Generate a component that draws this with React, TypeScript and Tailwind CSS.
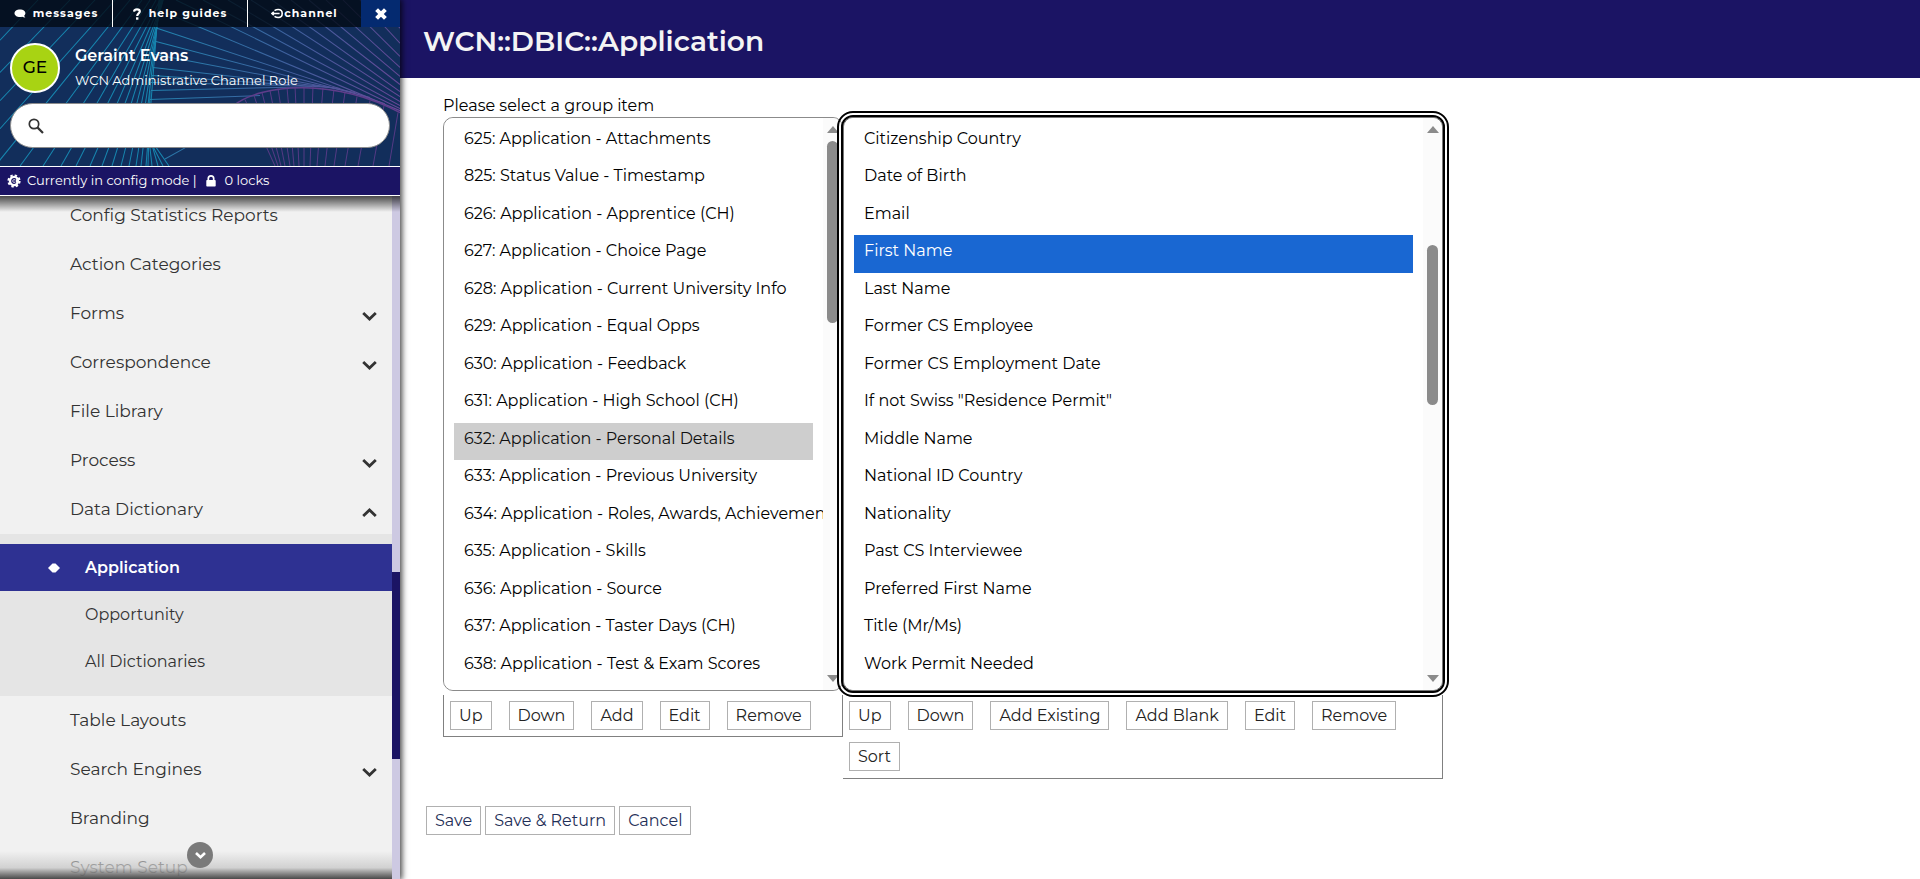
const groups = [
  "625: Application - Attachments",
  "825: Status Value - Timestamp",
  "626: Application - Apprentice (CH)",
  "627: Application - Choice Page",
  "628: Application - Current University Info",
  "629: Application - Equal Opps",
  "630: Application - Feedback",
  "631: Application - High School (CH)",
  "632: Application - Personal Details",
  "633: Application - Previous University",
  "634: Application - Roles, Awards, Achievements",
  "635: Application - Skills",
  "636: Application - Source",
  "637: Application - Taster Days (CH)",
  "638: Application - Test & Exam Scores",
];

const fields = [
  "Citizenship Country",
  "Date of Birth",
  "Email",
  "First Name",
  "Last Name",
  "Former CS Employee",
  "Former CS Employment Date",
  'If not Swiss "Residence Permit"',
  "Middle Name",
  "National ID Country",
  "Nationality",
  "Past CS Interviewee",
  "Preferred First Name",
  "Title (Mr/Ms)",
  "Work Permit Needed",
];

type Line = [number, number, number, number];

const cyanLines: Line[] = [
  [0, 40, 38, 0], [0, 72, 70, 0], [0, 100, 95, 0], [0, 128, 115, 0], [-5, 165, 130, 0],
  [20, 165, 142, 0], [43, 165, 150, 0], [61, 165, 156, 0], [76, 165, 160, 0], [90, 165, 162, 0],
  [102, 165, 163, 0], [112, 165, 163, 0], [121, 165, 163, 0], [129, 165, 162, 0], [136, 165, 161, 0],
  [141, 165, 160, 0], [146, 165, 159, 0], [148, 165, 150, 90], [152, 165, 147, 120], [158, 165, 148, 130],
  [163, 165, 150, 140], [169, 165, 155, 145],
];

const fanLines: Line[] = [
  [150, 99, 260, 95], [151, 90, 320, 86], [151, 82, 290, 85], [152, 75, 330, 87], [153, 67, 340, 88],
  [154, 54, 355, 92], [155, 41, 370, 97], [157, 28, 385, 103], [168, 14, 400, 110], [176, 0, 400, 108],
  [203, 0, 400, 105], [228, 0, 400, 101], [251, 0, 400, 96], [272, 0, 400, 91], [291, 0, 400, 84],
  [309, 0, 400, 76], [326, 0, 400, 67], [343, 0, 400, 56], [360, 0, 400, 43], [376, 0, 400, 28],
  [165, 158, 185, 147],
];

const purpleLines: Line[] = [
  [245, 99, 275, 165], [254, 95, 278, 165], [262, 92, 281, 165], [270, 90, 285, 165], [278, 88, 290, 165],
  [287, 87, 294, 165], [295, 86, 299, 165], [304, 86, 304, 165], [313, 86, 310, 165], [323, 87, 317, 165],
  [334, 89, 325, 165], [345, 92, 334, 165], [357, 96, 345, 165], [370, 100, 358, 165], [384, 105, 373, 165],
  [398, 112, 389, 165],
];

function lines(items: Line[], stroke: string) {
  return items.map(([x1, y1, x2, y2], i) => (
    <line key={i} x1={x1} y1={y1} x2={x2} y2={y2} stroke={stroke} />
  ));
}

function Pattern() {
  return (
    <svg className="absolute inset-0 h-full w-full" viewBox="0 0 400 165" preserveAspectRatio="none" aria-hidden="true">
      <defs>
        <linearGradient id="fan" gradientUnits="userSpaceOnUse" x1="150" y1="40" x2="400" y2="110">
          <stop offset="0" stopColor="#1f86b0" />
          <stop offset="0.5" stopColor="#3d629f" />
          <stop offset="1" stopColor="#6a4596" />
        </linearGradient>
      </defs>
      {lines(cyanLines, "#1787b0")}
      {lines(fanLines, "url(#fan)")}
      {lines(purpleLines, "#553a85")}
      <path d="M232 106C262 82 335 78 400 112" fill="none" stroke="#5f3d8a" strokeWidth="1.5" />
    </svg>
  );
}

function ChatIcon() {
  return (
    <svg className="h-[9px] w-3" viewBox="0 0 12 9" fill="currentColor" aria-hidden="true">
      <path d="M6 0.5C9 0.5 11.4 2.1 11.4 4.2C11.4 5.2 11 6 10.2 6.7C10.4 7.4 10.8 8 11.4 8.5C10.3 8.6 9 8.3 8.2 7.7C7.5 7.9 6.8 8 6 8C2.9 8 0.5 6.3 0.5 4.2C0.5 2.1 2.9 0.5 6 0.5Z" />
    </svg>
  );
}

function QuestionIcon() {
  return (
    <svg className="h-3 w-2" viewBox="0 0 8 12" aria-hidden="true">
      <path d="M1 3.6C1.2 2.1 2.4 1.3 4 1.3C5.7 1.3 6.8 2.2 6.8 3.5C6.8 5.4 4.2 5.4 4.2 8" fill="none" stroke="currentColor" strokeWidth="2.2" />
      <rect x="3" y="9.3" width="2.4" height="2.4" fill="currentColor" />
    </svg>
  );
}

function ChannelIcon() {
  return (
    <svg className="h-[11px] w-3" viewBox="0 0 12 11" fill="none" stroke="currentColor" strokeWidth="1.6" aria-hidden="true">
      <path d="M3.5 2.6C5 1.6 6 1.5 7.2 1.5C9.6 1.5 11.2 3.3 11.2 5.5C11.2 7.7 9.6 9.5 7.2 9.5C6 9.5 5 9.4 3.5 8.4M1 5.5H8.6M2.8 3.9L1 5.5L2.8 7.1" />
    </svg>
  );
}

function CloseIcon() {
  return (
    <svg className="h-3 w-3" viewBox="0 0 12 12" fill="none" stroke="currentColor" strokeWidth="4" aria-hidden="true">
      <path d="M1.6 1.6L10.4 10.4M10.4 1.6L1.6 10.4" />
    </svg>
  );
}

function SearchIcon() {
  return (
    <svg className="h-4 w-4 shrink-0 text-[#333]" viewBox="0 0 16 16" fill="none" stroke="currentColor" aria-hidden="true">
      <circle cx="6" cy="6" r="4.7" strokeWidth="1.7" />
      <path d="M9.4 9.4L15 15" strokeWidth="2.2" />
    </svg>
  );
}

function LockIcon() {
  return (
    <svg className="h-3 w-[10px]" viewBox="0 0 10 12" aria-hidden="true">
      <rect x="0.3" y="5" width="9.4" height="6.6" rx="0.8" fill="currentColor" />
      <path d="M2.3 5.5V3.6A2.7 2.7 0 0 1 7.7 3.6V5.5" fill="none" stroke="currentColor" strokeWidth="1.7" />
    </svg>
  );
}

function GearIcon() {
  return (
    <svg className="h-[14px] w-[14px]" viewBox="0 0 14 14" fill="none" aria-hidden="true">
      <circle cx="7" cy="7" r="5.2" fill="#fff" />
      <circle cx="7" cy="7" r="5.6" stroke="#fff" strokeWidth="2" strokeDasharray="2.4 2" />
      <path d="M8.9 5.6A2.3 2.3 0 1 0 8.9 8.4M6.2 7H9" stroke="#1b1464" strokeWidth="1.3" />
    </svg>
  );
}

function Chevron({ up }: { up?: boolean }) {
  return (
    <svg className="mt-[5px] h-[9px] w-[15px]" viewBox="0 0 15 9" fill="none" stroke="#333" strokeWidth="2.8" aria-hidden="true">
      <path d={up ? "M1.2 8L7.5 2L13.8 8" : "M1.2 1L7.5 7L13.8 1"} />
    </svg>
  );
}

function MenuItem({ label, open }: { label: string; open?: boolean }) {
  return (
    <a href="#" className="flex h-[49px] shrink-0 items-center justify-between pr-[15px] pl-[70px] text-[17px] text-[#333]">
      {label}
      {open !== undefined && <Chevron up={open} />}
    </a>
  );
}

function ListBox({ id, items, selected, label, focus, thumb }: {
  id: string; items: string[]; selected: string; label?: string; focus?: boolean; thumb: string;
}) {
  return (
    <div
      className={
        focus
          ? "relative z-10 flex rounded-[10px] border border-[#767676] bg-white outline-6 outline-black outline-double"
          : "flex rounded-[10px] border border-[#8b8b8b] bg-white"
      }
    >
      <select
        id={id}
        multiple
        size={15}
        autoFocus={focus}
        aria-label={label}
        defaultValue={[selected]}
        className="h-[572px] min-w-0 flex-1 appearance-none overflow-hidden rounded-l-[10px] bg-white px-[10px] py-[5px] text-[16px] text-black outline-none"
      >
        {items.map((t) => (
          <option key={t} className="px-[10px] pt-[6px] leading-[22px] odd:h-[37px] even:h-[38px]">
            {t}
          </option>
        ))}
      </select>
      <div className="flex w-[19px] flex-col items-center rounded-r-[10px] bg-[#fbfbfb] py-2" aria-hidden="true">
        <svg className="h-[7px] w-3 shrink-0" viewBox="0 0 12 7"><path d="M6 0L12 7H0Z" fill="#8b8b8b" /></svg>
        <div className="flex w-full flex-1 justify-center">
          <div className={thumb} />
        </div>
        <svg className="h-[7px] w-3 shrink-0" viewBox="0 0 12 7"><path d="M0 0H12L6 7Z" fill="#8b8b8b" /></svg>
      </div>
    </div>
  );
}

function Btn({ children, navy }: { children: string; navy?: boolean }) {
  return (
    <button
      type="button"
      className={
        navy
          ? "h-[29px] border border-[#b0b0b0] bg-white px-2 text-[16px] leading-[22px] text-[#1f2f57]"
          : "h-[29px] border border-[#b0b0b0] bg-white px-2 text-[16px] leading-[22px] text-[#222]"
      }
    >
      {children}
    </button>
  );
}

export default function App() {
  return (
    <div className="flex h-screen overflow-hidden bg-white font-['Montserrat','Inter',sans-serif] text-black">
      <aside className="relative z-20 flex w-[400px] shrink-0 flex-col bg-[#f1f1f1] shadow-[1px_0_6px_1px_rgba(0,0,0,0.75)]">
        <div className="relative h-[166px] shrink-0 bg-[#122e5b]">
          <Pattern />
          <nav className="relative flex h-[27px] text-[11px] font-bold tracking-[1px] text-white">
            <a href="#" className="flex w-[113px] items-center justify-center gap-[7px] border-r border-white bg-[#030a14]/80">
              <ChatIcon />
              messages
            </a>
            <a href="#" className="flex w-[135px] items-center justify-center gap-2 border-r border-white bg-[#030a14]/80">
              <QuestionIcon />
              help guides
            </a>
            <a href="#" className="flex flex-1 items-center justify-center gap-px bg-[#030a14]/80">
              <ChannelIcon />
              channel
            </a>
            <button type="button" aria-label="Close" className="flex w-[39px] items-center justify-center bg-[#042a70]">
              <CloseIcon />
            </button>
          </nav>
          <div className="relative flex items-center px-[10px] pt-4">
            <div className="flex h-[50px] w-[50px] items-center justify-center rounded-full border-2 border-white bg-[#a8d313] text-[17px] font-medium">
              GE
            </div>
            <div className="ml-[15px] text-white">
              <div className="text-[16px] leading-[25px] font-semibold">Geraint Evans</div>
              <div className="text-[13px] leading-[25px]">WCN Administrative Channel Role</div>
            </div>
          </div>
          <label className="relative mx-[10px] mt-[10px] flex h-[45px] items-center rounded-full border border-[#8c8c8c] bg-white pl-[17px]">
            <SearchIcon />
            <input type="text" aria-label="Search" className="min-w-0 flex-1 bg-transparent px-2 outline-none" />
          </label>
        </div>
        <div className="flex h-[30px] shrink-0 items-center border-y border-white bg-[#1b1464] pl-[7px] text-[13px] text-white">
          <GearIcon />
          <span className="ml-[6px]">Currently in config mode |</span>
          <span className="ml-[9px]">
            <LockIcon />
          </span>
          <span className="ml-[9px]">0 locks</span>
        </div>
        <div className="relative flex min-h-0 flex-1">
          <nav className="-mt-[5px] flex min-w-0 flex-1 flex-col overflow-hidden">
            <MenuItem label="Config Statistics Reports" />
            <MenuItem label="Action Categories" />
            <MenuItem label="Forms" open={false} />
            <MenuItem label="Correspondence" open={false} />
            <MenuItem label="File Library" />
            <MenuItem label="Process" open={false} />
            <MenuItem label="Data Dictionary" open />
            <div className="shrink-0 bg-[#e5e5e5] pt-[10px] pb-[11px] text-[16px] text-[#333]">
              <a href="#" className="flex h-[47px] items-center bg-[#2e3192] pl-12 font-semibold text-white">
                <svg className="mr-[25px] h-[10px] w-3" viewBox="0 0 12 10" aria-hidden="true">
                  <path d="M4.5 0.5H7.5L12 5L7.5 9.5H4.5L0 5Z" fill="#fff" />
                </svg>
                Application
              </a>
              <a href="#" className="flex h-[47px] items-center pl-[85px]">Opportunity</a>
              <a href="#" className="flex h-[47px] items-center pl-[85px]">All Dictionaries</a>
            </div>
            <MenuItem label="Table Layouts" />
            <MenuItem label="Search Engines" open={false} />
            <MenuItem label="Branding" />
            <MenuItem label="System Setup" />
          </nav>
          <div className="w-2 shrink-0 bg-[#cdc9e2]" aria-hidden="true">
            <div className="mt-[376px] h-[187px] bg-[#1b1464]" />
          </div>
          <div className="pointer-events-none absolute inset-x-0 top-0 h-4 bg-linear-to-b from-black/70 to-transparent" />
          <div className="pointer-events-none absolute right-2 bottom-0 left-0 h-[28px] bg-linear-to-b from-[#f1f1f1]/30 via-[#c9c9c9]/80 via-60% to-[#4a4a4a]" />
          <button
            type="button"
            aria-label="Scroll down"
            className="absolute bottom-[11px] left-1/2 flex h-[26px] w-[26px] -translate-x-1/2 items-center justify-center rounded-full bg-[#7a7a7a]"
          >
            <svg className="h-[7px] w-[11px]" viewBox="0 0 11 7" fill="none" stroke="#fff" strokeWidth="2.6" aria-hidden="true">
              <path d="M1 1L5.5 5.2L10 1" />
            </svg>
          </button>
        </div>
      </aside>

      <main className="min-w-0 flex-1">
        <header className="flex h-[78px] items-center bg-[#1b1464] pt-1 pl-[23px]">
          <h1 className="text-[28px] font-semibold text-[#f4f4f4]">WCN::DBIC::Application</h1>
        </header>
        <div className="pt-[17px] pl-[43px]">
          <label htmlFor="groups" className="block text-[16px] leading-[22px]">
            Please select a group item
          </label>
          <div className="flex items-start">
            <section className="w-[400px]">
              <ListBox
                id="groups"
                items={groups}
                selected="632: Application - Personal Details"
                thumb="mt-2 h-[182px] w-[11px] rounded-full bg-[#8b8b8b]"
              />
              <div className="mt-1 flex flex-wrap gap-x-[17px] gap-y-3 border border-t-0 border-[#808080] px-[6px] py-[6px]">
                <Btn>Up</Btn>
                <Btn>Down</Btn>
                <Btn>Add</Btn>
                <Btn>Edit</Btn>
                <Btn>Remove</Btn>
              </div>
            </section>
            <section className="w-[600px]">
              <ListBox
                id="fields"
                items={fields}
                selected="First Name"
                label="Group fields"
                focus
                thumb="mt-[112px] h-[160px] w-[11px] rounded-full bg-[#8b8b8b]"
              />
              <div className="mt-1 flex flex-wrap gap-x-[17px] gap-y-3 border-r border-b border-[#808080] px-[6px] pt-[6px] pb-[7px]">
                <Btn>Up</Btn>
                <Btn>Down</Btn>
                <Btn>Add Existing</Btn>
                <Btn>Add Blank</Btn>
                <Btn>Edit</Btn>
                <Btn>Remove</Btn>
                <Btn>Sort</Btn>
              </div>
            </section>
          </div>
        </div>
        <div className="mt-[27px] flex gap-1 pl-[26px]">
          <Btn navy>Save</Btn>
          <Btn navy>{"Save & Return"}</Btn>
          <Btn navy>Cancel</Btn>
        </div>
      </main>
    </div>
  );
}
